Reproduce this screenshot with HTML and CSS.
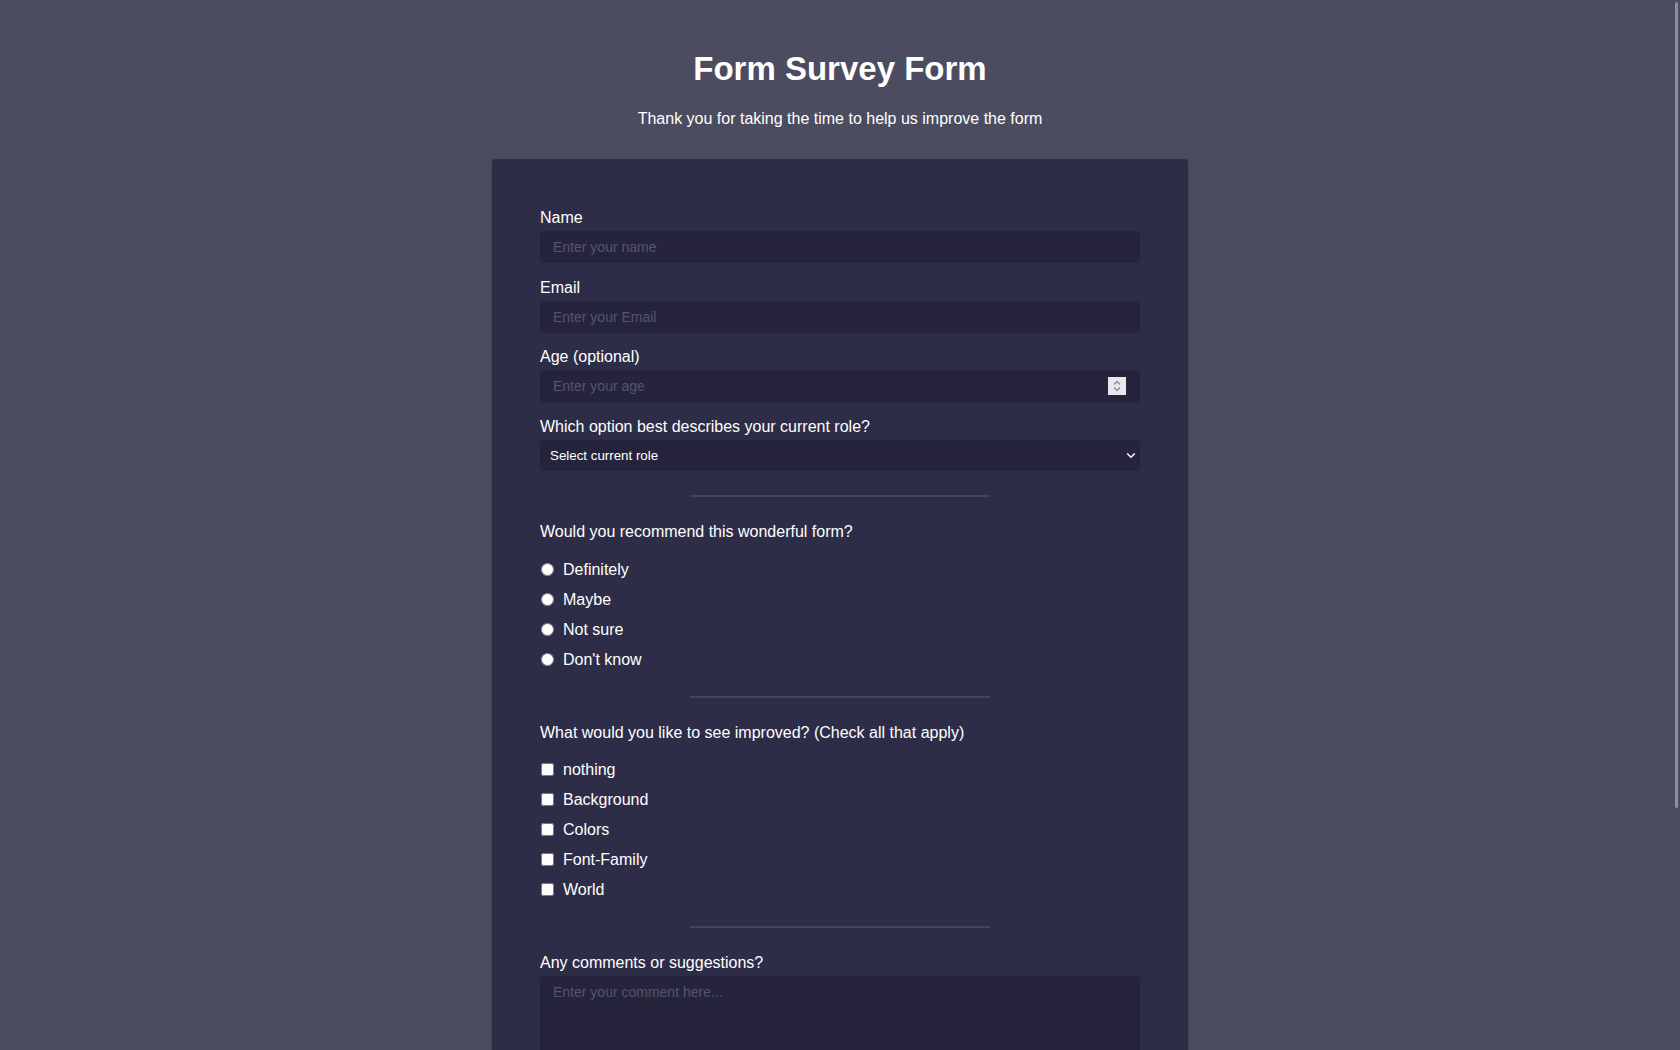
FILE: index.html
```html
<!DOCTYPE html>
<html lang="en">
<head>
<meta charset="utf-8">
<title>Form Survey Form</title>
<link rel="stylesheet" href="styles.css">
</head>
<body>
<header class="header">
  <h1 class="title">Form Survey Form</h1>
  <p class="subtitle">Thank you for taking the time to help us improve the form</p>
</header>
<main class="card">
  <form class="form">
    <div class="group">
      <label class="label" for="name">Name</label>
      <input class="field" id="name" type="text" placeholder="Enter your name">
    </div>
    <div class="group">
      <label class="label" for="email">Email</label>
      <input class="field" id="email" type="email" placeholder="Enter your Email">
    </div>
    <div class="group">
      <label class="label" for="age">Age (optional)</label>
      <div class="wrap">
        <input class="field number" id="age" type="number" placeholder="Enter your age">
        <span class="spin" aria-hidden="true">
          <svg width="18" height="18" viewBox="0 0 18 18"><path d="M6 7.5 9 4.5 12 7.5" fill="none" stroke="#8a8a92" stroke-width="1.3"/><path d="M6 10.5 9 13.5 12 10.5" fill="none" stroke="#8a8a92" stroke-width="1.3"/></svg>
        </span>
      </div>
    </div>
    <div class="group group-last">
      <label class="label" for="role">Which option best describes your current role?</label>
      <div class="wrap">
        <select class="field select" id="role">
          <option>Select current role</option>
          <option>Student</option>
          <option>Full Time Job</option>
          <option>Full Time Learner</option>
          <option>Prefer not to say</option>
          <option>Other</option>
        </select>
        <svg class="chev" width="10" height="7" viewBox="0 0 10 7" aria-hidden="true"><path d="M1.2 1.5 5 5.2 8.8 1.5" fill="none" stroke="#ffffff" stroke-width="1.5"/></svg>
      </div>
    </div>
    <hr class="divider">
    <div class="section">
      <p class="label">Would you recommend this wonderful form?</p>
      <div class="options">
        <label class="option"><input class="radio" type="radio" name="rec">Definitely</label>
        <label class="option"><input class="radio" type="radio" name="rec">Maybe</label>
        <label class="option"><input class="radio" type="radio" name="rec">Not sure</label>
        <label class="option"><input class="radio" type="radio" name="rec">Don't know</label>
      </div>
    </div>
    <hr class="divider">
    <div class="section">
      <p class="label">What would you like to see improved? (Check all that apply)</p>
      <div class="options options-check">
        <label class="option"><input class="check" type="checkbox">nothing</label>
        <label class="option"><input class="check" type="checkbox">Background</label>
        <label class="option"><input class="check" type="checkbox">Colors</label>
        <label class="option"><input class="check" type="checkbox">Font-Family</label>
        <label class="option"><input class="check" type="checkbox">World</label>
      </div>
    </div>
    <hr class="divider">
    <div class="group">
      <label class="label" for="comment">Any comments or suggestions?</label>
      <textarea class="field area" id="comment" placeholder="Enter your comment here..."></textarea>
    </div>
    <button class="submit" type="submit">Submit</button>
  </form>
</main>
<div class="scrollbar" aria-hidden="true"></div>
</body>
</html>
```
FILE: styles.css
```css
* { box-sizing: border-box; }
html, body { margin: 0; padding: 0; }
body {
  background: #4c4c60;
  color: #ffffff;
  font-family: "Liberation Sans", Arial, sans-serif;
  font-size: 16px;
  line-height: 20px;
  padding-bottom: 90px;
}
.header { padding-top: 50px; text-align: center; }
.title {
  margin: 0;
  font-size: 33px;
  line-height: 37px;
  font-weight: 700;
}
.subtitle { margin: 22px 0 0; line-height: 20px; }
.card {
  width: 696px;
  margin: 30px auto 0;
  padding: 48px;
  background: #2e2d47;
  border-radius: 4px;
  box-shadow: 0 1px 3px rgba(0,0,0,0.2);
}
.form { display: flex; flex-direction: column; }
.group { display: flex; flex-direction: column; margin-bottom: 13.5px; }
.group-last { margin-bottom: 24px; }
.label { display: block; margin: 0 0 3px; padding-top: 1px; line-height: 20px; }
.wrap { position: relative; }
.field {
  display: block;
  width: 100%;
  height: 32px;
  border: none;
  border-radius: 4px;
  background: #25243c;
  color: #ffffff;
  font-family: inherit;
  font-size: 14px;
  padding: 0 13px;
  outline: none;
}
.field::placeholder { color: #55546b; }
.number { -moz-appearance: textfield; appearance: textfield; }
.number::-webkit-inner-spin-button,
.number::-webkit-outer-spin-button { -webkit-appearance: none; margin: 0; }
.spin {
  position: absolute;
  right: 14px;
  top: 7px;
  width: 18px;
  height: 18px;
  background: #e9e9ed;
  display: block;
}
.spin svg { display: block; }
.select {
  -webkit-appearance: none;
  appearance: none;
  font-size: 13.33px;
  padding: 0 7px 0 10px;
  height: 31px;
}
.chev { position: absolute; right: 4px; top: 12px; pointer-events: none; }
.area { height: 200px; padding: 8px 13px; resize: vertical; }
.divider {
  width: 50%;
  height: 2px;
  border: none;
  background: #45445b;
  margin: 0 auto 24px;
}
.section { display: flex; flex-direction: column; }
.options { display: flex; flex-direction: column; margin-top: 10px; margin-bottom: 21px; }
.options-check { margin-top: 9px; margin-bottom: 21px; }
.option { display: flex; align-items: center; height: 30px; }
.radio, .check { width: 13px; height: 13px; margin: 0 9px 0 1px; }
.submit {
  margin-top: 24px;
  height: 44px;
  border: none;
  border-radius: 4px;
  background: #25243c;
  color: #ffffff;
  font-family: inherit;
  font-size: 16px;
}
.scrollbar {
  position: fixed;
  top: 2px;
  right: 2px;
  width: 3px;
  height: 806px;
  background: #8e8e96;
  border-radius: 2px;
}
```
